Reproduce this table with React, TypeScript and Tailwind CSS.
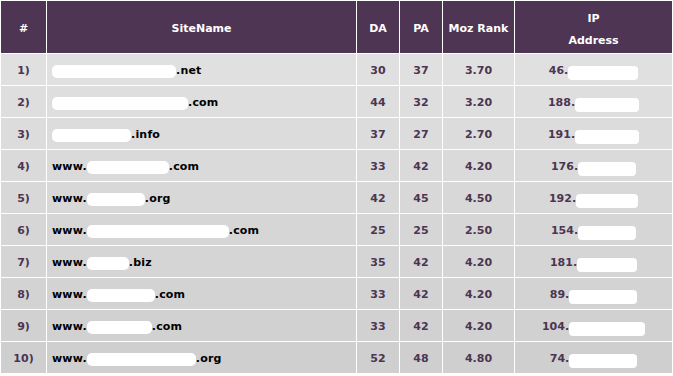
const rowBg = [
  'bg-[#e0e0e0]',
  'bg-[#dedede]',
  'bg-[#dcdcdc]',
  'bg-[#dadada]',
  'bg-[#d8d8d8]',
  'bg-[#d6d6d6]',
  'bg-[#d5d5d5]',
  'bg-[#d3d3d3]',
  'bg-[#d1d1d1]',
  'bg-[#cfcfcf]',
];

interface Site {
  prefix: string;
  hidden: number;
  tld: string;
  da: number;
  pa: number;
  moz: string;
  ip: string;
  ipHidden: number;
}

const sites: Site[] = [
  { prefix: '', hidden: 124, tld: '.net', da: 30, pa: 37, moz: '3.70', ip: '46.', ipHidden: 70 },
  { prefix: '', hidden: 136, tld: '.com', da: 44, pa: 32, moz: '3.20', ip: '188.', ipHidden: 64 },
  { prefix: '', hidden: 79, tld: '.info', da: 37, pa: 27, moz: '2.70', ip: '191.', ipHidden: 64 },
  { prefix: 'www.', hidden: 82, tld: '.com', da: 33, pa: 42, moz: '4.20', ip: '176.', ipHidden: 58 },
  { prefix: 'www.', hidden: 58, tld: '.org', da: 42, pa: 45, moz: '4.50', ip: '192.', ipHidden: 62 },
  { prefix: 'www.', hidden: 142, tld: '.com', da: 25, pa: 25, moz: '2.50', ip: '154.', ipHidden: 58 },
  { prefix: 'www.', hidden: 42, tld: '.biz', da: 35, pa: 42, moz: '4.20', ip: '181.', ipHidden: 60 },
  { prefix: 'www.', hidden: 68, tld: '.com', da: 33, pa: 42, moz: '4.20', ip: '89.', ipHidden: 68 },
  { prefix: 'www.', hidden: 65, tld: '.com', da: 33, pa: 42, moz: '4.20', ip: '104.', ipHidden: 76 },
  { prefix: 'www.', hidden: 109, tld: '.org', da: 52, pa: 48, moz: '4.80', ip: '74.', ipHidden: 68 },
];

const num = 'flex items-center justify-center text-[#4b3552]';

export default function App() {
  return (
    <div
      className="w-[673px] h-[376px] bg-white text-[11px] font-bold"
      style={{ fontFamily: '"DejaVu Sans", Verdana, sans-serif' }}
    >
      <div className="grid grid-cols-[45px_309px_42px_42px_71px_157px] gap-px p-px">
        {/* Header */}
        {['#', 'SiteName', 'DA', 'PA', 'Moz Rank'].map(h => (
          <div key={h} className="h-[52px] bg-[#4f3554] text-white flex items-center justify-center pt-[4px]">
            {h}
          </div>
        ))}
        <div className="h-[52px] bg-[#4f3554] text-white flex flex-col items-center justify-center leading-[22px] pt-[5px]">
          <span>IP</span>
          <span>Address</span>
        </div>

        {/* Rows */}
        {sites.map((s, i) => (
          <div key={i} className="contents">
            <div className={`${rowBg[i]} h-[31px] ${num} pt-[4px]`}>{i + 1})</div>
            <div className={`${rowBg[i]} h-[31px] flex items-center pl-[5px] pt-[4px] text-black tracking-[0.2px]`}>
              {s.prefix}
              <span className="inline-block h-[13px] bg-white rounded-[5px]" style={{ width: s.hidden }} />
              {s.tld}
            </div>
            <div className={`${rowBg[i]} h-[31px] ${num} pt-[4px]`}>{s.da}</div>
            <div className={`${rowBg[i]} h-[31px] ${num} pt-[4px]`}>{s.pa}</div>
            <div className={`${rowBg[i]} h-[31px] ${num} pt-[4px]`}>{s.moz}</div>
            <div className={`${rowBg[i]} h-[31px] ${num} pt-[4px]`}>
              {s.ip}
              <span className="inline-block h-[14px] bg-white rounded-[4px] mt-[2px]" style={{ width: s.ipHidden }} />
            </div>
          </div>
        ))}
      </div>
    </div>
  );
}
